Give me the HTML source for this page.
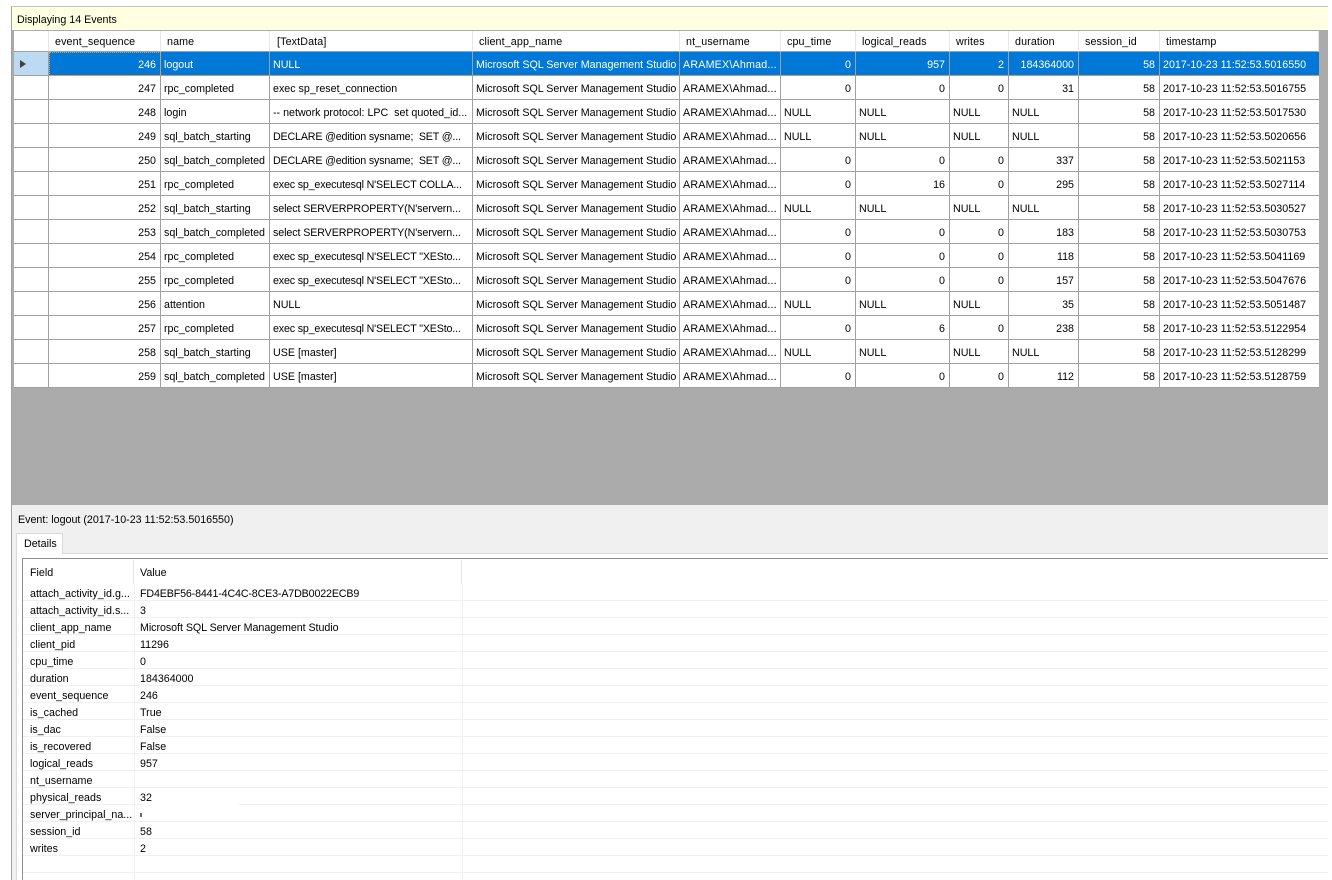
<!DOCTYPE html>
<html><head><meta charset="utf-8"><style>
html,body{margin:0;padding:0;width:1332px;height:880px;overflow:hidden;background:#fff;font-family:"Liberation Sans",sans-serif;font-size:10.7px;color:#000}
div{position:absolute;box-sizing:border-box}
table{position:absolute;border-collapse:separate;border-spacing:0;table-layout:fixed}
td{box-sizing:border-box;white-space:nowrap;overflow:hidden;padding:0}
#g td{height:24px;background:#fff;border-right:1px solid #a0a0a0;border-bottom:1px solid #a0a0a0;padding:2px 0 0 3px}
#g tr.h td{height:21px;border-right:1px solid #e6e6e6;border-bottom:1px solid #a0a0a0;padding:1px 0 0 6px;letter-spacing:.13px}
#g td.r{text-align:right;padding:2px 4px 0 0}
#g td.e{padding:0;border-right:1px solid #a0a0a0}
#g tr.h td.e{border-right:1px solid #e6e6e6}
#g td:last-child{border-right:0}
#g tr.s td{background:#0078d7;color:#fff}
#g tr.s td.e{background:#bcdaf2}
#g td.a{letter-spacing:.2px}
#g td.k{letter-spacing:-.17px}
#g td.m{letter-spacing:-.1px}
#d td{height:17px;border-right:1px solid #f0f0f0;border-bottom:1px solid #f0f0f0;padding:4px 0 0 7px}
#d td:last-child{border-right:0}
#d tr.h td{height:25px;border:0;padding:2px 0 0 7px}
#d td.v{padding-left:5px}
#d tr.h td.v{padding-left:5px}
</style></head><body>
<div style="left:11px;top:6px;width:1317px;height:874px;background:#ababab;border-left:1px solid #a0a0a0"></div>
<div style="left:11px;top:6px;width:1317px;height:1px;background:#c4c4b4"></div>
<div style="left:12px;top:7px;width:1316px;height:23px;background:#ffffe1;padding:6px 0 0 5px;line-height:14px">Displaying 14 Events</div>
<table id="g" style="left:14px;top:31px;width:1305px">
<colgroup><col style="width:35px"><col style="width:112px"><col style="width:109px"><col style="width:203px"><col style="width:207px"><col style="width:101px"><col style="width:75px"><col style="width:94px"><col style="width:59px"><col style="width:70px"><col style="width:81px"><col style="width:159px"></colgroup>
<tr class="h"><td class="e"></td><td>event_sequence</td><td>name</td><td style="padding-left:7px">[TextData]</td><td>client_app_name</td><td>nt_username</td><td>cpu_time</td><td>logical_reads</td><td>writes</td><td>duration</td><td>session_id</td><td>timestamp</td></tr>
<tr class="s"><td class="e"></td><td class="r" style="outline:1px dotted #f0a030;outline-offset:-1px">246</td><td>logout</td><td>NULL</td><td>Microsoft SQL Server Management Studio</td><td class="a">ARAMEX\Ahmad...</td><td class="r">0</td><td class="r">957</td><td class="r">2</td><td class="r">184364000</td><td class="r">58</td><td>2017-10-23 11:52:53.5016550</td></tr>
<tr><td class="e"></td><td class="r">247</td><td>rpc_completed</td><td>exec sp_reset_connection</td><td>Microsoft SQL Server Management Studio</td><td class="a">ARAMEX\Ahmad...</td><td class="r">0</td><td class="r">0</td><td class="r">0</td><td class="r">31</td><td class="r">58</td><td>2017-10-23 11:52:53.5016755</td></tr>
<tr><td class="e"></td><td class="r">248</td><td>login</td><td>-- network protocol: LPC&nbsp; set quoted_id...</td><td>Microsoft SQL Server Management Studio</td><td class="a">ARAMEX\Ahmad...</td><td>NULL</td><td>NULL</td><td>NULL</td><td>NULL</td><td class="r">58</td><td>2017-10-23 11:52:53.5017530</td></tr>
<tr><td class="e"></td><td class="r">249</td><td>sql_batch_starting</td><td class="k">DECLARE @edition sysname;&nbsp; SET @...</td><td>Microsoft SQL Server Management Studio</td><td class="a">ARAMEX\Ahmad...</td><td>NULL</td><td>NULL</td><td>NULL</td><td>NULL</td><td class="r">58</td><td>2017-10-23 11:52:53.5020656</td></tr>
<tr><td class="e"></td><td class="r">250</td><td>sql_batch_completed</td><td class="k">DECLARE @edition sysname;&nbsp; SET @...</td><td>Microsoft SQL Server Management Studio</td><td class="a">ARAMEX\Ahmad...</td><td class="r">0</td><td class="r">0</td><td class="r">0</td><td class="r">337</td><td class="r">58</td><td>2017-10-23 11:52:53.5021153</td></tr>
<tr><td class="e"></td><td class="r">251</td><td>rpc_completed</td><td class="k">exec sp_executesql N'SELECT COLLA...</td><td>Microsoft SQL Server Management Studio</td><td class="a">ARAMEX\Ahmad...</td><td class="r">0</td><td class="r">16</td><td class="r">0</td><td class="r">295</td><td class="r">58</td><td>2017-10-23 11:52:53.5027114</td></tr>
<tr><td class="e"></td><td class="r">252</td><td>sql_batch_starting</td><td class="m">select SERVERPROPERTY(N'servern...</td><td>Microsoft SQL Server Management Studio</td><td class="a">ARAMEX\Ahmad...</td><td>NULL</td><td>NULL</td><td>NULL</td><td>NULL</td><td class="r">58</td><td>2017-10-23 11:52:53.5030527</td></tr>
<tr><td class="e"></td><td class="r">253</td><td>sql_batch_completed</td><td class="m">select SERVERPROPERTY(N'servern...</td><td>Microsoft SQL Server Management Studio</td><td class="a">ARAMEX\Ahmad...</td><td class="r">0</td><td class="r">0</td><td class="r">0</td><td class="r">183</td><td class="r">58</td><td>2017-10-23 11:52:53.5030753</td></tr>
<tr><td class="e"></td><td class="r">254</td><td>rpc_completed</td><td class="k">exec sp_executesql N'SELECT "XESto...</td><td>Microsoft SQL Server Management Studio</td><td class="a">ARAMEX\Ahmad...</td><td class="r">0</td><td class="r">0</td><td class="r">0</td><td class="r">118</td><td class="r">58</td><td>2017-10-23 11:52:53.5041169</td></tr>
<tr><td class="e"></td><td class="r">255</td><td>rpc_completed</td><td class="k">exec sp_executesql N'SELECT "XESto...</td><td>Microsoft SQL Server Management Studio</td><td class="a">ARAMEX\Ahmad...</td><td class="r">0</td><td class="r">0</td><td class="r">0</td><td class="r">157</td><td class="r">58</td><td>2017-10-23 11:52:53.5047676</td></tr>
<tr><td class="e"></td><td class="r">256</td><td>attention</td><td>NULL</td><td>Microsoft SQL Server Management Studio</td><td class="a">ARAMEX\Ahmad...</td><td>NULL</td><td>NULL</td><td>NULL</td><td class="r">35</td><td class="r">58</td><td>2017-10-23 11:52:53.5051487</td></tr>
<tr><td class="e"></td><td class="r">257</td><td>rpc_completed</td><td class="k">exec sp_executesql N'SELECT "XESto...</td><td>Microsoft SQL Server Management Studio</td><td class="a">ARAMEX\Ahmad...</td><td class="r">0</td><td class="r">6</td><td class="r">0</td><td class="r">238</td><td class="r">58</td><td>2017-10-23 11:52:53.5122954</td></tr>
<tr><td class="e"></td><td class="r">258</td><td>sql_batch_starting</td><td>USE [master]</td><td>Microsoft SQL Server Management Studio</td><td class="a">ARAMEX\Ahmad...</td><td>NULL</td><td>NULL</td><td>NULL</td><td>NULL</td><td class="r">58</td><td>2017-10-23 11:52:53.5128299</td></tr>
<tr><td class="e"></td><td class="r">259</td><td>sql_batch_completed</td><td>USE [master]</td><td>Microsoft SQL Server Management Studio</td><td class="a">ARAMEX\Ahmad...</td><td class="r">0</td><td class="r">0</td><td class="r">0</td><td class="r">112</td><td class="r">58</td><td>2017-10-23 11:52:53.5128759</td></tr>
</table>
<div style="left:20px;top:60px;width:0;height:0;border-left:6px solid #404040;border-top:4.5px solid transparent;border-bottom:4.5px solid transparent"></div>
<div style="left:12px;top:505px;width:1316px;height:375px;background:#f0f0f0"></div>
<div style="left:18px;top:513px;line-height:15px;white-space:nowrap">Event: logout (2017-10-23 11:52:53.5016550)</div>
<div style="left:16px;top:553px;width:1312px;height:327px;background:#fff;border-top:1px solid #d9d9d9;border-left:1px solid #d9d9d9"></div>
<div style="left:16px;top:533px;width:47px;height:21px;background:#fff;border:1px solid #d9d9d9;border-bottom:0;padding:3px 0 0 7px;line-height:14px">Details</div>
<div style="left:22px;top:558px;width:1306px;height:322px;background:#fff;border-top:1px solid #8a8f94;border-left:1px solid #8a8f94"></div>
<table id="d" style="left:23px;top:559px;width:1305px">
<colgroup><col style="width:112px"><col style="width:328px"><col style="width:865px"></colgroup>
<tr class="h"><td>Field</td><td class="v">Value</td><td></td></tr>
<tr><td>attach_activity_id.g...</td><td class="v" style="letter-spacing:-.15px">FD4EBF56-8441-4C4C-8CE3-A7DB0022ECB9</td><td></td></tr>
<tr><td>attach_activity_id.s...</td><td class="v">3</td><td></td></tr>
<tr><td>client_app_name</td><td class="v" style="letter-spacing:-.05px">Microsoft SQL Server Management Studio</td><td></td></tr>
<tr><td>client_pid</td><td class="v">11296</td><td></td></tr>
<tr><td>cpu_time</td><td class="v">0</td><td></td></tr>
<tr><td>duration</td><td class="v">184364000</td><td></td></tr>
<tr><td>event_sequence</td><td class="v">246</td><td></td></tr>
<tr><td>is_cached</td><td class="v">True</td><td></td></tr>
<tr><td>is_dac</td><td class="v">False</td><td></td></tr>
<tr><td>is_recovered</td><td class="v">False</td><td></td></tr>
<tr><td>logical_reads</td><td class="v">957</td><td></td></tr>
<tr><td>nt_username</td><td class="v"></td><td></td></tr>
<tr><td>physical_reads</td><td class="v">32</td><td></td></tr>
<tr><td>server_principal_na...</td><td class="v"></td><td></td></tr>
<tr><td>session_id</td><td class="v">58</td><td></td></tr>
<tr><td>writes</td><td class="v">2</td><td></td></tr>
<tr><td></td><td class="v"></td><td></td></tr>
</table>
<div style="left:133px;top:560px;width:1px;height:24px;background:#e3e3e3"></div>
<div style="left:461px;top:560px;width:1px;height:24px;background:#e3e3e3"></div>
<div style="left:134px;top:873px;width:1px;height:7px;background:#f0f0f0"></div>
<div style="left:462px;top:873px;width:1px;height:7px;background:#f0f0f0"></div>
<div style="left:142px;top:803px;width:97px;height:3px;background:#fff"></div>
<div style="left:140px;top:813px;width:2px;height:4px;background:#666"></div>
</body></html>
